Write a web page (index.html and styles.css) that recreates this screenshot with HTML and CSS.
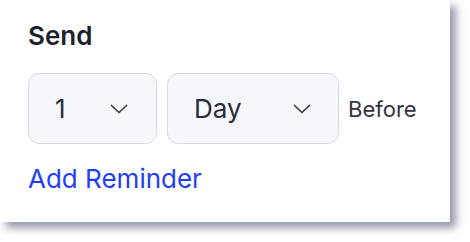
FILE: index.html
```html
<!DOCTYPE html>
<html lang="en">
<head>
    <meta charset="UTF-8">
    <meta name="viewport" content="width=device-width, initial-scale=1.0">
    <title>Reminder</title>
    <link rel="stylesheet" href="styles.css">
</head>
<body>

    <div class="page">
        <div class="card">
            <div class="title">Send</div>

            <!-- Reminder row -->
            <div class="row">
                <div class="select select-num">
                    <span>1</span>
                    <svg class="chevron" width="18" height="10" viewBox="0 0 18 10"><path d="M1.5 1.5 L9 8.5 L16.5 1.5" fill="none" stroke="#3b3c4a" stroke-width="1.7" stroke-linecap="round" stroke-linejoin="round"/></svg>
                </div>
                <div class="select select-unit">
                    <span>Day</span>
                    <svg class="chevron" width="18" height="10" viewBox="0 0 18 10"><path d="M1.5 1.5 L9 8.5 L16.5 1.5" fill="none" stroke="#3b3c4a" stroke-width="1.7" stroke-linecap="round" stroke-linejoin="round"/></svg>
                </div>
                <span class="before">Before</span>
            </div>

            <a class="add" href="#">Add Reminder</a>
        </div>
    </div>

</body>
</html>
```

FILE: styles.css
```css
* {
    margin: 0;
    padding: 0;
    box-sizing: border-box;
}

body {
    background-color: #ffffff;
    font-family: Inter, "Noto Sans", sans-serif;
}

.page {
    width: 470px;
    height: 242px;
}

.card {
    width: 450px;
    height: 222px;
    background-color: #ffffff;
    padding: 20px 28px 0 28px;
    box-shadow: 6px 6px 8px rgba(95, 100, 130, 0.65);
}

.title {
    font-size: 26px;
    line-height: 32px;
    font-weight: 600;
    color: #1e1f2e;
}

.row {
    display: flex;
    align-items: center;
    margin-top: 21px;
}

.select {
    display: flex;
    align-items: center;
    justify-content: space-between;
    height: 71px;
    background-color: #f6f7fb;
    border: 1.5px solid #d9dae8;
    border-radius: 11px;
    font-size: 26px;
    color: #2a2b3a;
}

.select-num {
    width: 129px;
    padding: 0 28px 0 26px;
}

.select-unit {
    width: 172px;
    margin-left: 10px;
    padding: 0 27px 0 26px;
}

.chevron {
    display: block;
}

.before {
    margin-left: 9px;
    font-size: 22px;
    color: #33343f;
}

.add {
    display: block;
    margin-top: 19px;
    font-size: 26px;
    line-height: 32px;
    color: #1f3ef5;
    text-decoration: none;
}
```
